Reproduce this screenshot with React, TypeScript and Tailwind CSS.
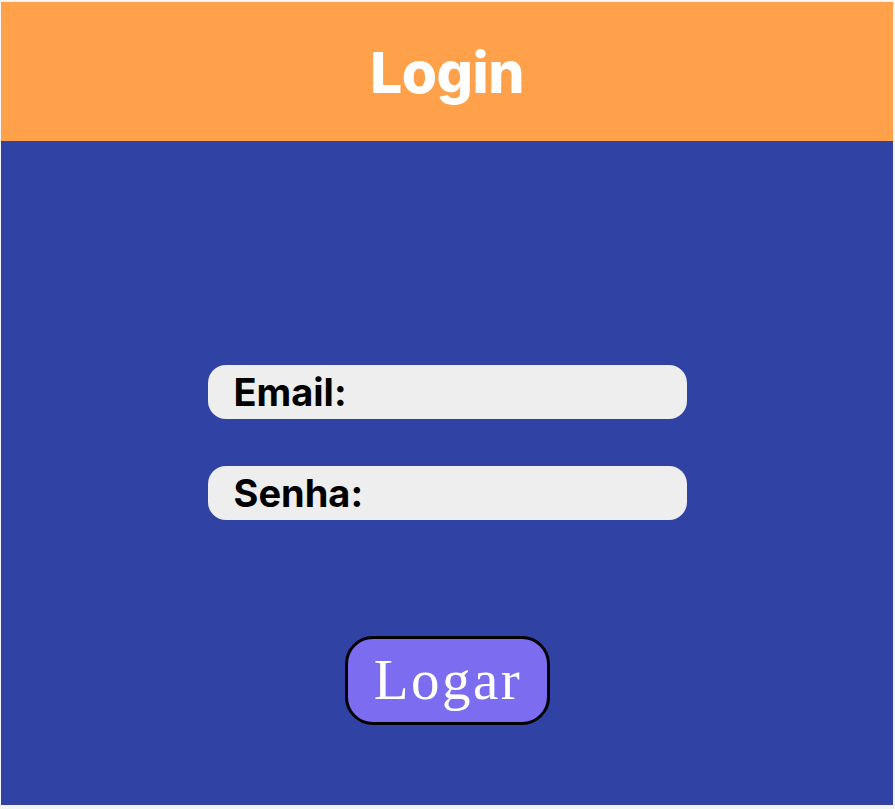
export default function App() {
  return (
    <div className="min-h-[809px] w-full bg-[#f4f4f4] pt-[2px] pl-[1px]">
      <div className="w-[892px] h-[803px] flex flex-col bg-[#3043a5]">
        <div className="h-[139px] bg-[#ffa14a] flex items-center justify-center">
          <h1 className="text-white font-extrabold text-[57px] leading-none font-['Inter',sans-serif] tracking-[-0.5px] pt-[2px]">Login</h1>
        </div>
        <div className="flex flex-col items-center pt-[224px]">
          <div className="w-[479px] h-[54px] rounded-[18px] bg-[#eeeeee] flex items-center pl-[26px]">
            <span className="text-black font-bold text-[38px] leading-none font-['Inter',sans-serif]">Email:</span>
          </div>
          <div className="mt-[47px] w-[479px] h-[54px] rounded-[18px] bg-[#eeeeee] flex items-center pl-[26px]">
            <span className="text-black font-bold text-[38px] leading-none font-['Inter',sans-serif]">Senha:</span>
          </div>
          <button className="mt-[116px] w-[205px] h-[89px] rounded-[28px] border-[3px] border-black bg-[#7b6cf0] flex items-center justify-center text-white text-[57px] leading-none font-['Liberation_Serif',serif] tracking-[2.5px] font-normal pb-[2px] pl-[2px]">
            Logar
          </button>
        </div>
      </div>
    </div>
  );
}
